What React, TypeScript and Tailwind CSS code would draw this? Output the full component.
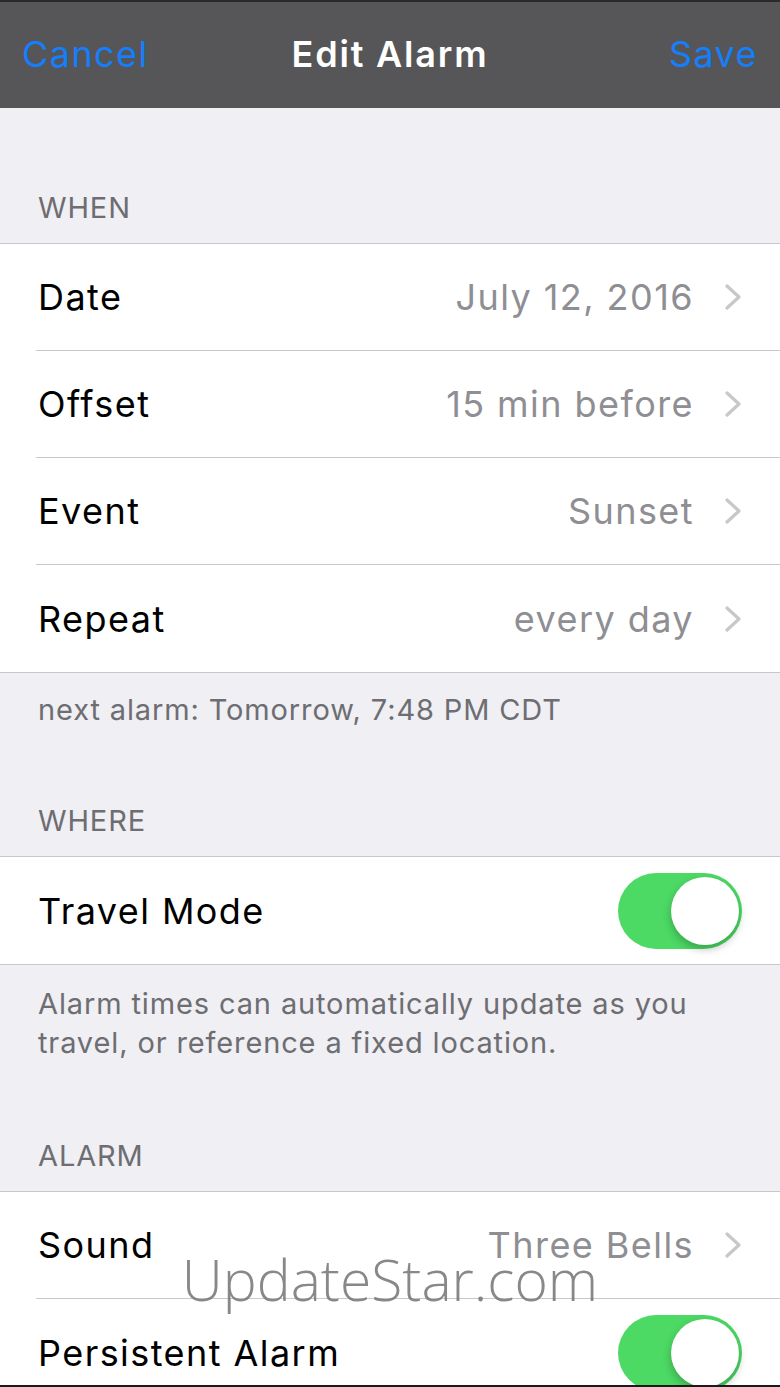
import React from "react";

const Chevron = () => (
  <svg width="18" height="26" viewBox="0 0 18 26" className="ml-[30px] shrink-0">
    <path d="M3 2 L15 13 L3 24" fill="none" stroke="#c7c7cc" strokeWidth="3.2" strokeLinecap="round" strokeLinejoin="round" />
  </svg>
);

const Toggle = () => (
  <div className="relative h-[76px] w-[124px] shrink-0 rounded-full bg-[#4cd964]">
    <div className="absolute top-[4px] right-[3px] h-[68px] w-[68px] rounded-full bg-white shadow-[0_4px_8px_rgba(0,0,0,0.25)]" />
  </div>
);

const Row = ({ label, value, toggle, last }: { label: string; value?: string; toggle?: boolean; last?: boolean }) => (
  <div className="pl-[36px]">
    <div className={`flex h-[107px] items-center pr-[38px] text-[36px] tracking-[0.04em] ${last ? "h-[106px]" : "border-b border-[#c8c7cc]"}`}>
      <span className="flex-1 pl-[2px] text-black">{label}</span>
      {value && (
        <>
          <span className="text-[#8e8e93]">{value}</span>
          <Chevron />
        </>
      )}
      {toggle && <Toggle />}
    </div>
  </div>
);

const SectionLabel = ({ children, h }: { children: string; h: string }) => (
  <div className={`flex ${h} items-end px-[38px] pb-[20px] text-[29px] leading-[30px] tracking-[0.03em] text-[#6d6d72]`}>{children}</div>
);

export default function App() {
  return (
    <div className="relative h-[1387px] w-[780px] overflow-hidden bg-[#efeff4]" style={{ fontFamily: "Inter, 'Open Sans', sans-serif" }}>
      <div className="grid h-[108px] grid-cols-[1fr_auto_1fr] items-center border-t-[2px] border-[#2a2a2a] bg-[#565658] px-[22px] pb-[2px] text-[36px] tracking-[0.04em]">
        <span className="text-[#147efb]">Cancel</span>
        <span className="font-semibold tracking-[0.05em] text-white">Edit Alarm</span>
        <span className="text-right text-[#147efb]">Save</span>
      </div>

      <SectionLabel h="h-[135px]">WHEN</SectionLabel>
      <div className="border-y border-[#c8c7cc] bg-white">
        <Row label="Date" value="July 12, 2016" />
        <Row label="Offset" value="15 min before" />
        <Row label="Event" value="Sunset" />
        <Row label="Repeat" value="every day" last />
      </div>
      <div className="px-[38px] pt-[22px] text-[29px] leading-[30px] tracking-[0.03em] text-[#6d6d72]">next alarm: Tomorrow, 7:48 PM CDT</div>

      <SectionLabel h="h-[131px]">WHERE</SectionLabel>
      <div className="border-y border-[#c8c7cc] bg-white">
        <Row label="Travel Mode" toggle last />
      </div>
      <div className="px-[38px] pt-[19px] text-[29px] leading-[39px] tracking-[0.03em] text-[#6d6d72]">
        Alarm times can automatically update as you
        <br />
        travel, or reference a fixed location.
      </div>

      <SectionLabel h="h-[129px]">ALARM</SectionLabel>
      <div className="border-t border-[#c8c7cc] bg-white">
        <Row label="Sound" value="Three Bells" />
        <Row label="Persistent Alarm" toggle last />
      </div>

      <div className="pointer-events-none absolute top-[1251px] left-0 w-full text-center text-[57px] leading-none font-light text-[#737373]/85" style={{ fontFamily: "'Open Sans', sans-serif" }}>
        UpdateStar.com
      </div>
      <div className="absolute bottom-0 left-0 h-[2px] w-full bg-[#1a1a1a]" />
    </div>
  );
}
